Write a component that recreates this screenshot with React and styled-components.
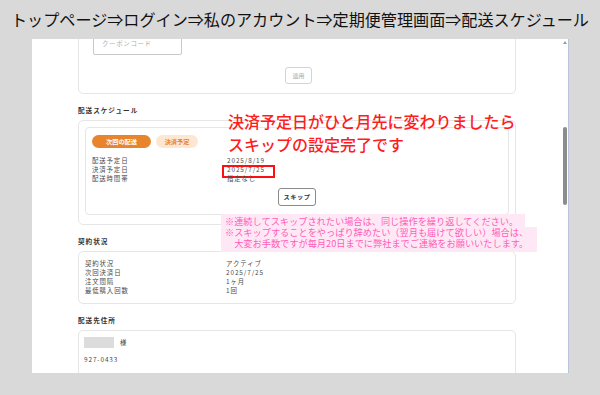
import { createGlobalStyle, styled } from 'styled-components';

const GlobalStyle = createGlobalStyle`
  html, body {
    margin: 0;
    padding: 0;
    background: #d9d9d9;
  }
  body {
    font-family: "Noto Sans CJK JP", "Noto Sans", sans-serif;
    width: 600px;
    height: 395px;
    overflow: hidden;
  }
`;

const scheduleRows = [
  ['配送予定日', '2025/8/19'],
  ['決済予定日', '2025/7/25', true],
  ['配送時間帯', '指定なし'],
];

const contractRows = [
  ['契約状況', 'アクティブ'],
  ['次回決済日', '2025/7/25'],
  ['注文間隔', '1ヶ月'],
  ['最低購入回数', '1回'],
];

const App = () => {
  return (
    <>
      <GlobalStyle />
      <StyledTitle>
        トップページ⇒ログイン⇒私のアカウント⇒定期便管理画面⇒配送スケジュール
      </StyledTitle>
      <StyledPanel>
        <StyledContent>
          <StyledCard $padding='11px 14px 9px'>
            <StyledCouponForm>
              <StyledInput>クーポンコード</StyledInput>
              <StyledApplyButton>適用</StyledApplyButton>
            </StyledCouponForm>
          </StyledCard>

          <StyledSectionLabel>配送スケジュール</StyledSectionLabel>
          <StyledCard $padding='6px 6px 9px 6px'>
            <StyledInnerCard>
              <StyledPills>
                <StyledPill $active $w={59}>次回の配送</StyledPill>
                <StyledPill $w={42}>決済予定</StyledPill>
              </StyledPills>
              <StyledRows>
                {scheduleRows.map(([label, value, marked]) => (
                  <StyledRow key={label} $labelWidth={135}>
                    <span>{label}</span>
                    <StyledValue $marked={marked}>{value}</StyledValue>
                  </StyledRow>
                ))}
              </StyledRows>
              <StyledSkipButton>スキップ</StyledSkipButton>
            </StyledInnerCard>
          </StyledCard>

          <StyledSectionLabel>契約状況</StyledSectionLabel>
          <StyledCard $padding='7px 6px 8px'>
            {contractRows.map(([label, value]) => (
              <StyledRow key={label} $labelWidth={141}>
                <span>{label}</span>
                <StyledValue>{value}</StyledValue>
              </StyledRow>
            ))}
          </StyledCard>

          <StyledSectionLabel>配送先住所</StyledSectionLabel>
          <StyledCard $padding='6px 5px 20px'>
            <StyledNameRow>
              <StyledMask />
              <span>様</span>
            </StyledNameRow>
            <StyledPostal>927-0433</StyledPostal>
          </StyledCard>
        </StyledContent>

        <StyledScrollbar>
          <StyledArrow />
          <StyledThumb />
        </StyledScrollbar>

        <StyledCallout>
          決済予定日がひと月先に変わりましたら
          <br />
          スキップの設定完了です
        </StyledCallout>

        <StyledNote>
          <StyledNoteBlock $w={304} $pad='2px 0 0 4px'>
            ※連続してスキップされたい場合は、同じ操作を繰り返してください。
          </StyledNoteBlock>
          <StyledNoteBlock $w={316} $pad='0 0 3px 4px'>
            ※スキップすることをやっぱり辞めたい（翌月も届けて欲しい）場合は、
            <br />
            {'\u3000'}大変お手数ですが毎月20日までに弊社までご連絡をお願いいたします。
          </StyledNoteBlock>
        </StyledNote>
      </StyledPanel>
    </>
  );
};

export default App;

const StyledTitle = styled.h1`
  margin: 0;
  height: 39px;
  line-height: 39px;
  text-align: center;
  font-size: 16.1px;
  font-weight: 400;
  color: #111;
  white-space: nowrap;
`;

const StyledPanel = styled.div`
  position: relative;
  display: flex;
  margin-left: 32px;
  width: 537px;
  height: 334px;
  box-sizing: border-box;
  background: #fff;
  border-right: 1px solid #b9c3da;
  overflow: hidden;
`;

const StyledContent = styled.div`
  flex: 1;
  margin-top: -20px;
  padding-left: 46px;
`;

const StyledCard = styled.div`
  width: 438px;
  box-sizing: border-box;
  border: 1px solid #e6e6e6;
  border-radius: 5px;
  padding: ${(p) => p.$padding};
`;

const StyledCouponForm = styled.div`
  display: flex;
  flex-direction: column;
  width: 219px;
`;

const StyledInput = styled.div`
  width: 89px;
  height: 24px;
  box-sizing: border-box;
  border: 1px solid #c9c9c9;
  border-radius: 2px;
  padding-left: 8px;
  font-size: 6.5px;
  line-height: 22px;
  letter-spacing: 0.6px;
  color: #b0b0b0;
`;

const StyledApplyButton = styled.div`
  align-self: flex-end;
  margin-top: 12px;
  width: 27px;
  height: 17px;
  box-sizing: border-box;
  border: 1px solid #d4d4d4;
  border-radius: 3px;
  font-size: 6px;
  line-height: 15px;
  text-align: center;
  color: #a8a8a8;
`;

const StyledSectionLabel = styled.div`
  margin: 11px 0 4px;
  font-size: 6.6px;
  font-weight: 700;
  line-height: 11px;
  letter-spacing: 1px;
  color: #333;
`;

const StyledInnerCard = styled.div`
  display: flex;
  flex-direction: column;
  border: 1px solid #e6e6e6;
  border-radius: 4px;
  padding: 7px 6px 8px;
`;

const StyledPills = styled.div`
  display: flex;
  gap: 5px;
  margin-bottom: 8px;
`;

const StyledPill = styled.div`
  width: ${(p) => p.$w}px;
  height: 13px;
  border-radius: 7px;
  font-size: 6.2px;
  font-weight: 700;
  line-height: 13px;
  text-align: center;
  color: ${(p) => (p.$active ? '#fff' : '#e8842c')};
  background: ${(p) => (p.$active ? '#e8842c' : '#fde7d2')};
`;

const StyledRows = styled.div`
  display: flex;
  flex-direction: column;
`;

const StyledRow = styled.div`
  display: grid;
  grid-template-columns: ${(p) => p.$labelWidth}px 1fr;
  font-size: 6.4px;
  line-height: 9px;
  letter-spacing: 0.9px;
  color: #4a4a4a;
`;

const StyledValue = styled.span`
  position: relative;
  justify-self: start;

  ${(p) =>
    p.$marked &&
    `
    &::after {
      content: '';
      position: absolute;
      left: -5px;
      right: -10px;
      top: -0.5px;
      bottom: -3.5px;
      border: 2px solid #ff1010;
    }
  `}
`;

const StyledSkipButton = styled.div`
  align-self: center;
  margin-top: 4.5px;
  width: 38px;
  height: 18px;
  box-sizing: border-box;
  border: 1px solid #8a8a8a;
  border-radius: 3px;
  font-size: 6.2px;
  font-weight: 700;
  line-height: 16px;
  letter-spacing: 0.6px;
  text-align: center;
  color: #333;
`;

const StyledNameRow = styled.div`
  display: flex;
  align-items: center;
  gap: 6px;
  font-size: 6.4px;
  color: #444;
`;

const StyledMask = styled.div`
  width: 30px;
  height: 11px;
  background: #dcdcdc;
`;

const StyledPostal = styled.div`
  margin-top: 7.5px;
  font-size: 6.4px;
  line-height: 9px;
  letter-spacing: 0.9px;
  color: #444;
`;

const StyledScrollbar = styled.div`
  display: flex;
  flex-direction: column;
  align-items: center;
  width: 6px;
`;

const StyledArrow = styled.div`
  margin-top: 2px;
  width: 0;
  height: 0;
  border-left: 2px solid transparent;
  border-right: 2px solid transparent;
  border-bottom: 3px solid #9a9a9a;
`;

const StyledThumb = styled.div`
  margin-top: 83px;
  width: 4px;
  height: 78px;
  border-radius: 2px;
  background: #8c8c8c;
`;

const StyledCallout = styled.div`
  position: absolute;
  left: 196px;
  top: 71px;
  font-size: 16px;
  font-weight: 500;
  line-height: 23px;
  color: #ff1c1c;
  white-space: nowrap;
`;

const StyledNote = styled.div`
  position: absolute;
  left: 189px;
  top: 175px;
  display: flex;
  flex-direction: column;
`;

const StyledNoteBlock = styled.div`
  width: ${(p) => p.$w}px;
  box-sizing: border-box;
  padding: ${(p) => p.$pad};
  background: #ffe8f6;
  font-size: 9.2px;
  line-height: 11px;
  color: #ff5cb8;
  white-space: nowrap;
`;
